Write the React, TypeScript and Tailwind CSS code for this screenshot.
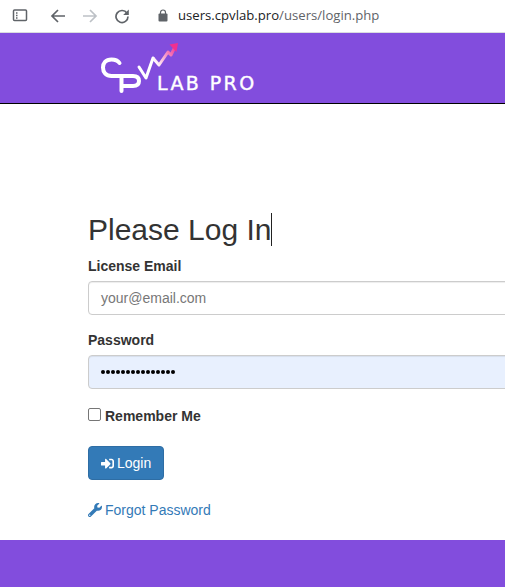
import { FaSignInAlt, FaWrench } from "react-icons/fa";

const BrowserBar = () => (
  <div className="flex h-[33px] items-center border-b border-[#dadce0] bg-white pb-px">
    <svg width="16" height="13" viewBox="0 0 16 13" className="ml-[12px] text-[#5f6368]" fill="none" stroke="currentColor" strokeWidth="1.5">
      <rect x="1.5" y="1" width="13" height="10.5" rx="1" />
      <path d="M4 4h1.5M4 6.5h1.5M4 9h1.5" />
    </svg>
    <svg width="16" height="16" viewBox="0 0 16 16" className="ml-[22px] text-[#5f6368]" fill="none" stroke="currentColor" strokeWidth="1.7">
      <path d="M15 8H2.5M8 2 2 8l6 6" />
    </svg>
    <svg width="16" height="16" viewBox="0 0 16 16" className="ml-[16px] text-[#bdc1c6]" fill="none" stroke="currentColor" strokeWidth="1.7">
      <path d="M1 8h12.5M8 2l6 6-6 6" />
    </svg>
    <svg width="16" height="16" viewBox="0 0 16 16" className="ml-[16px] text-[#5f6368]" fill="none">
      <path d="M13 5.2A6 6 0 1 0 14 8.5" stroke="currentColor" strokeWidth="1.7" />
      <path d="M14.8 1.5v5.6H9.2z" fill="currentColor" />
    </svg>
    <svg width="10" height="13" viewBox="0 0 10 13" className="ml-[28px] text-[#5f6368]" fill="none">
      <path d="M2.5 5V3.5a2.5 2.5 0 0 1 5 0V5" stroke="currentColor" strokeWidth="1.2" />
      <rect x="0.5" y="4.5" width="9" height="8" rx="1" fill="currentColor" />
    </svg>
    <p className="ml-[10px] font-['Open_Sans',sans-serif] text-[13.15px] text-[#202124]">
      users.cpvlab.pro<span className="text-[#5f6368]">/users/login.php</span>
    </p>
  </div>
);

const Logo = () => (
  <div className="relative ml-[98px] h-[60px] w-[165px]">
    <svg width="90" height="60" viewBox="0 0 90 60" fill="none" className="absolute left-0 top-0">
      <defs>
        <linearGradient id="trend" x1="55" y1="22" x2="78" y2="8" gradientUnits="userSpaceOnUse">
          <stop offset="0" stopColor="#ffffff" />
          <stop offset="1" stopColor="#f0308f" />
        </linearGradient>
      </defs>
      {/* one stroke runs from the top of the mark round into the bowl */}
      <path
        d="M21.500 25C19.500 22 16.500 21.500 13.500 21.500 7.500 21.500 5 25 5 29.500 5 34.500 8 38 13.500 38H35C39 38 41 40 41 43 41 46 39 48 35 48H23.500M23.500 39V53"
        stroke="#fff"
        strokeWidth="4"
        strokeLinecap="round"
        strokeLinejoin="round"
      />
      <path d="M41 29 48 40 55 20" stroke="#fff" strokeWidth="3" strokeLinecap="round" strokeLinejoin="round" />
      <path d="M55 20 61 27 70 14 73 17 77 9" stroke="url(#trend)" strokeWidth="3" strokeLinejoin="round" />
      <path d="M80 5 78.500 14 71.500 6.500z" fill="#f0308f" />
    </svg>
    <span className="absolute left-[59px] top-[34px] font-['DejaVu_Sans',sans-serif] text-[19px] leading-[22px] tracking-[2.4px] text-white [-webkit-text-stroke:0.4px_white]">
      LAB PRO
    </span>
  </div>
);

const Field = ({ label, children }: { label: string; children: React.ReactNode }) => (
  <div className="mb-[15px]">
    <label className="mb-[5px] block text-[14px] font-bold leading-[20px] text-[#333]">{label}</label>
    {children}
  </div>
);

export default function App() {
  return (
    <div className="h-[587px] w-[505px] overflow-hidden bg-white font-['Liberation_Sans',sans-serif]">
      <BrowserBar />
      <header className="flex h-[71px] items-center border-b border-black bg-[#824ddd]">
        <Logo />
      </header>
      <main className="h-[436px] w-[640px] pl-[88px] pt-[109px]">
        <h1 className="flex h-[33px] items-center text-[30px] leading-[33px] text-[#333]">
          Please Log In
          <span className="h-[33px] w-px bg-[#222]" />
        </h1>
        <div className="mt-[10px]">
          <Field label="License Email">
            <div className="flex h-[34px] items-center rounded-[4px] border border-[#ccc] bg-white px-[12px] text-[14px] text-[#777] shadow-[inset_0_1px_1px_rgba(0,0,0,0.075)]">
              your@email.com
            </div>
          </Field>
          <Field label="Password">
            <div className="flex h-[34px] items-center gap-[1px] rounded-[4px] border border-[#ccc] bg-[#e8f0fe] px-[12px] shadow-[inset_0_1px_1px_rgba(0,0,0,0.075)]">
              {Array.from({ length: 15 }).map((_, i) => (
                <span key={i} className="h-[4px] w-[4px] rounded-full bg-black" />
              ))}
            </div>
          </Field>
        </div>
        <div className="mt-[19px] flex h-[13px] items-center">
          <span className="h-[13px] w-[13px] rounded-[2px] border border-[#767676] bg-white" />
          <span className="ml-[4px] pt-[2px] text-[14px] font-bold leading-[20px] text-[#333]">Remember Me</span>
        </div>
        <button className="mt-[25px] flex h-[34px] w-[76px] items-center gap-[3px] rounded-[4px] border border-[#2e6da4] bg-[#337ab7] pl-[12px] text-[14px] text-white">
          <FaSignInAlt className="h-[13px] w-[13px]" />
          Login
        </button>
        <a className="mt-[20px] flex h-[20px] items-center gap-[3px] text-[14px] text-[#337ab7]">
          <FaWrench className="h-[14px] w-[14px]" />
          Forgot Password
        </a>
      </main>
      <footer className="h-[47px] bg-[#824ddd]" />
    </div>
  );
}
